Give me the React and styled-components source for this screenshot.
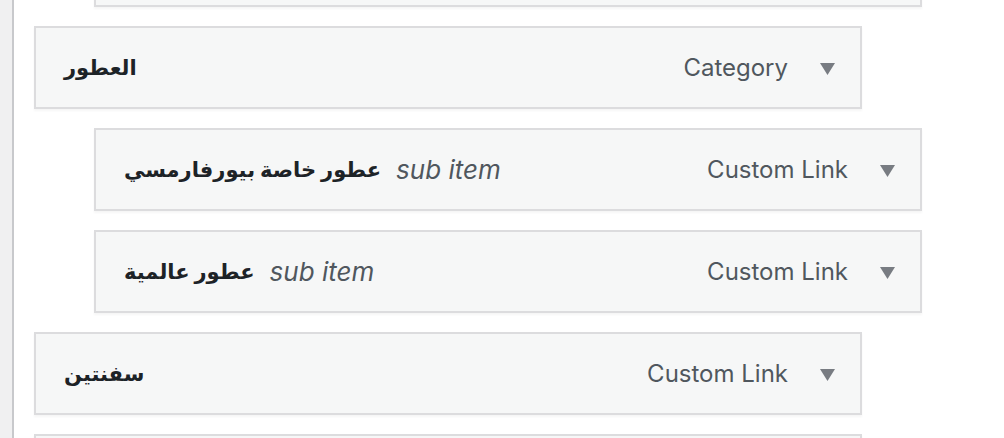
import React from "react";
import styled, { createGlobalStyle } from "styled-components";

const GlobalStyle = createGlobalStyle`
  html, body {
    margin: 0;
    padding: 0;
    height: 100%;
    overflow: hidden;
    background: #fff;
  }
  #root {
    height: 100%;
  }
`;

const Page = styled.div`
  display: flex;
  height: 100%;
  font-family: Inter, "DejaVu Sans", sans-serif;
`;

const Sidebar = styled.div`
  width: 12px;
  flex-shrink: 0;
  background: #f0f0f1;
  border-right: 2px solid #c8c9cc;
`;

const Content = styled.div`
  flex: 1;
  padding-left: 20px;
  overflow: hidden;
`;

const MenuList = styled.ul`
  list-style: none;
  margin: -76px 0 0 0;
  padding: 0;
  display: flex;
  flex-direction: column;
  gap: 19px;
`;

const ItemBar = styled.li`
  box-sizing: border-box;
  width: 828px;
  height: 83px;
  margin-left: ${(p) => p.$depth * 60}px;
  display: flex;
  align-items: center;
  padding: 0 25px 0 28px;
  background: #f6f7f7;
  border: 2px solid #dcdcde;
  box-shadow: 0 2px 2px rgba(0, 0, 0, 0.04);
`;

const Title = styled.span`
  font-family: Inter, "DejaVu Sans", sans-serif;
  font-weight: 700;
  font-size: 21px;
  color: #1d2327;
`;

const SubLabel = styled.span`
  margin-left: 15px;
  font-style: italic;
  font-size: 26px;
  color: #50575e;
`;

const Controls = styled.span`
  margin-left: auto;
  display: flex;
  align-items: center;
  gap: 32px;
`;

const ItemType = styled.span`
  font-size: 24px;
  color: #50575e;
`;

const Arrow = styled.svg`
  width: 15px;
  height: 12px;
  display: block;
  margin-top: 2px;
`;

const items = [
  { depth: 1 },
  { title: "العطور", type: "Category", depth: 0 },
  { title: "عطور خاصة بيورفارمسي", type: "Custom Link", depth: 1, sub: true },
  { title: "عطور عالمية", type: "Custom Link", depth: 1, sub: true },
  { title: "سفنتين", type: "Custom Link", depth: 0 },
  { depth: 0 },
];

function MenuItem({ item }) {
  return (
    <ItemBar $depth={item.depth}>
      {item.title && <Title dir="rtl">{item.title}</Title>}
      {item.sub && <SubLabel>sub item</SubLabel>}
      {item.type && (
        <Controls>
          <ItemType>{item.type}</ItemType>
          <Arrow viewBox="0 0 15 12">
            <polygon points="0,0 15,0 7.5,12" fill="#787c82" />
          </Arrow>
        </Controls>
      )}
    </ItemBar>
  );
}

export default function App() {
  return (
    <>
      <GlobalStyle />
      <Page>
        <Sidebar />
        <Content>
          <MenuList>
            {items.map((item, i) => (
              <MenuItem key={i} item={item} />
            ))}
          </MenuList>
        </Content>
      </Page>
    </>
  );
}
